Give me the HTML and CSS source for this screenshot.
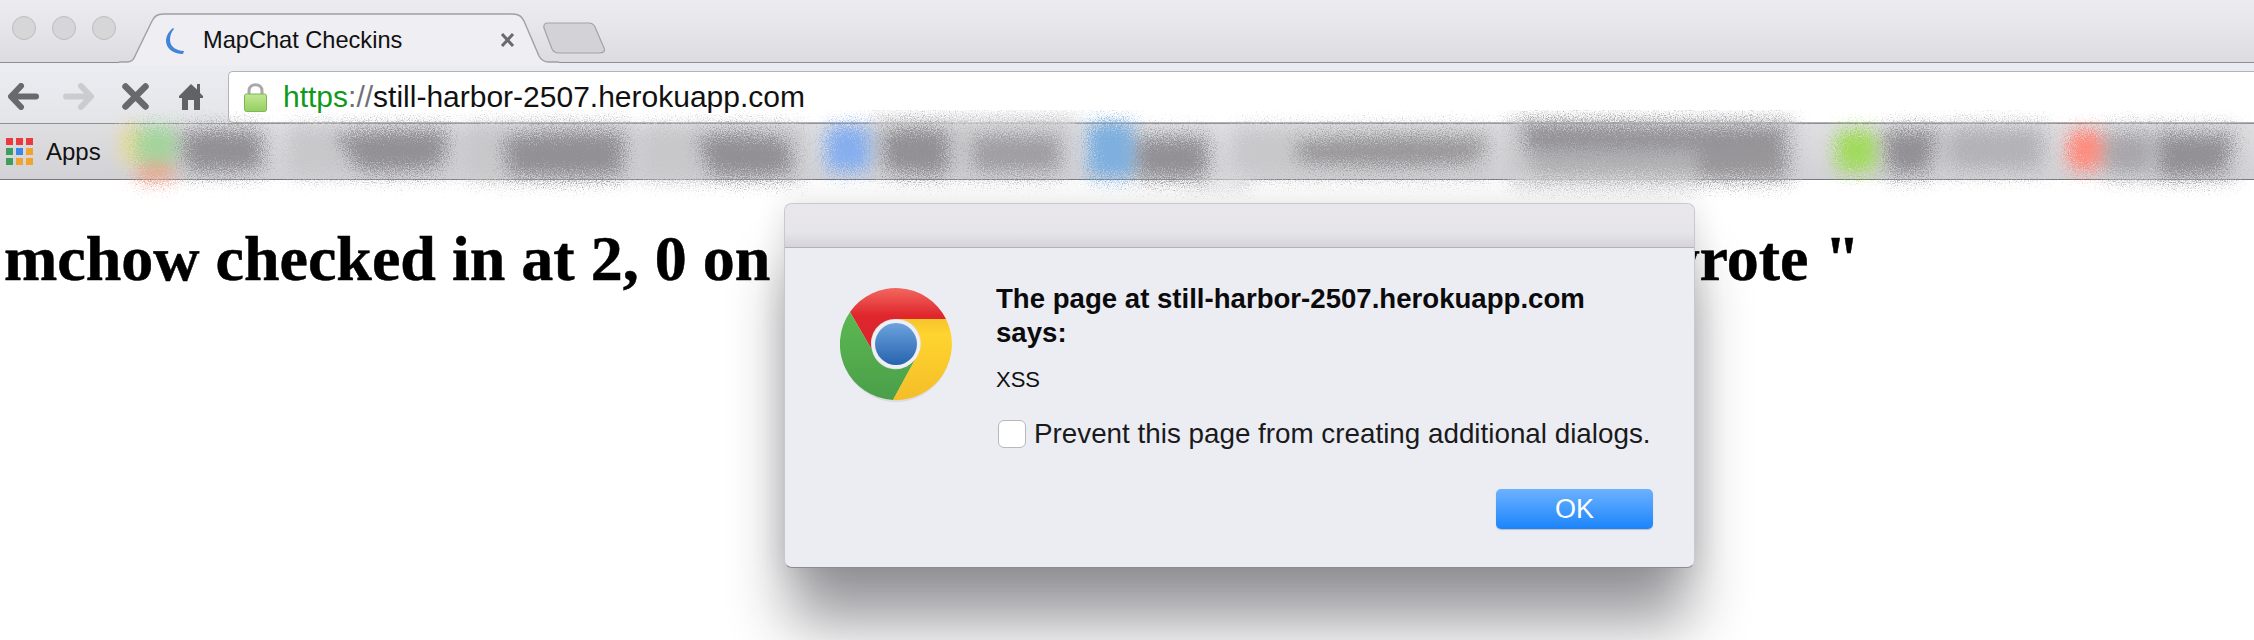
FILE: index.html
```html
<!DOCTYPE html>
<html lang="en">
<head>
<meta charset="utf-8">
<title>MapChat Checkins</title>
<link rel="stylesheet" href="styles.css">
</head>
<body>
<header class="chrome">
  <div class="tabstrip">
    <div class="lights"><span class="light"></span><span class="light"></span><span class="light"></span></div>
    <div class="tab">
      <svg class="tab-shape" width="440" height="52" viewBox="0 0 440 52"><path d="M0 49 H8 Q14 49 16 43 L33 8 Q36 1 44 1 H394 Q402 1 405 8 L420 43 Q423 49 430 49 H440 V52 H0 Z" fill="#eeeef3"/><path d="M0 49 H8 Q14 49 16 43 L33 8 Q36 1 44 1 H394 Q402 1 405 8 L420 43 Q423 49 430 49 H440" fill="none" stroke="#a0a0a4" stroke-width="1.4"/><rect x="14" y="49" width="412" height="3" fill="#eeeef3"/></svg>
      <svg class="spinner" width="18" height="26" viewBox="0 0 18 26"><path d="M7 0 C2 4 0 9 0 13 C0 20 7 26 17 26 L18 23 C11 23 4 19 4 12 C4 8 5 4 8 1 Z" fill="#4285d8"/></svg>
      <span class="tab-title">MapChat Checkins</span>
      <svg class="tab-close" width="15" height="14" viewBox="0 0 15 14"><path d="M2 1 L13 13 M13 1 L2 13" stroke="#6a6a6e" stroke-width="3"/></svg>
    </div>
    <svg class="newtab" width="62" height="32" viewBox="0 0 62 32"><path d="M5 1 H46 Q50 1 52 5 L61 26 Q63 31 56 31 H16 Q11 31 9 27 L1 6 Q0 1 5 1 Z" fill="#d3d3d7" stroke="#a3a3a7" stroke-width="1.2"/></svg>
  </div>
  <div class="toolbar">
    <div class="nav">
      <svg class="nav-icon back" width="31" height="27" viewBox="0 0 31 27"><path d="M13 3 L3 13.5 L13 24 M4 13.5 H28" fill="none" stroke="#69686c" stroke-width="6" stroke-linecap="round" stroke-linejoin="round"/></svg>
      <svg class="nav-icon forward" width="31" height="27" viewBox="0 0 31 27"><path d="M18 3 L28 13.5 L18 24 M27 13.5 H3" fill="none" stroke="#ccccd0" stroke-width="6" stroke-linecap="round" stroke-linejoin="round"/></svg>
      <svg class="nav-icon stop" width="27" height="27" viewBox="0 0 27 27"><path d="M3.5 3.5 L23.5 23.5 M23.5 3.5 L3.5 23.5" stroke="#69686c" stroke-width="6.5" stroke-linecap="round"/></svg>
      <svg class="nav-icon home" width="24" height="27" viewBox="0 0 24 27"><path d="M12 1 L18 6.5 V1 H21 V10 L24 13 V15 H21 V27 H15 V17 H9 V27 H3 V15 H0 V13 Z" fill="#626165"/></svg>
    </div>
    <div class="omnibox">
      <svg class="lock" width="23" height="29" viewBox="0 0 23 29"><defs><linearGradient id="lk" x1="0" y1="0" x2="0" y2="1"><stop offset="0" stop-color="#c3e795"/><stop offset="1" stop-color="#92cf5f"/></linearGradient></defs><path d="M5 12 V8 C5 -0.5 18 -0.5 18 8 V12" fill="none" stroke="#a9a9ad" stroke-width="3"/><rect x="0.5" y="11" width="22" height="17.5" rx="2" fill="url(#lk)" stroke="#7fb455"/></svg>
      <span class="url"><span class="scheme">https</span><span class="sep">://</span>still-harbor-2507.herokuapp.com</span>
    </div>
  </div>
  <div class="bookmarks">
    <div class="apps-grid">
      <i class="r"></i><i class="r"></i><i class="r"></i>
      <i class="g"></i><i class="b"></i><i class="o"></i>
      <i class="g"></i><i class="o"></i><i class="o"></i>
    </div>
    <span class="apps-label">Apps</span>
    <svg class="smudges" width="2254" height="90" viewBox="0 110 2254 90">
      <defs>
        <filter id="grain" x="-5%" y="-50%" width="110%" height="200%" color-interpolation-filters="sRGB">
          <feTurbulence type="fractalNoise" baseFrequency="0.85" numOctaves="3" seed="4" result="n"/>
          <feGaussianBlur in="SourceGraphic" stdDeviation="7" result="s"/>
          <feDisplacementMap in="s" in2="n" scale="40" xChannelSelector="R" yChannelSelector="G"/>
        </filter>
      </defs>
      <g filter="url(#grain)">
        <g fill="#c8c8cb">
          <rect x="170" y="126" width="100" height="50" rx="12"/><rect x="286" y="126" width="170" height="50" rx="12"/>
          <rect x="462" y="124" width="172" height="56" rx="12"/><rect x="640" y="126" width="166" height="54" rx="12"/>
          <rect x="872" y="122" width="200" height="54" rx="10"/><rect x="1134" y="132" width="80" height="48" rx="10"/>
          <rect x="1232" y="128" width="262" height="48" rx="12"/><rect x="1506" y="118" width="290" height="64" rx="10"/>
          <rect x="1880" y="126" width="60" height="52" rx="10"/><rect x="1940" y="124" width="110" height="50" rx="12"/>
          <rect x="2100" y="126" width="140" height="54" rx="12"/>
          <rect x="1513" y="178" width="190" height="10" rx="4" fill="#dcdcdf"/><rect x="870" y="116" width="210" height="10" rx="4" fill="#d8d8db"/>
          <rect x="1190" y="176" width="60" height="12" rx="4" fill="#dcdcdf"/>
        </g>
        <g fill="#929094">
          <path d="M182 134 Q220 126 260 134 L262 168 Q220 174 188 170 Z"/>
          <path d="M336 136 Q390 126 448 132 L442 164 Q420 174 360 170 Z"/>
          <path d="M504 138 Q560 128 624 134 L622 174 Q570 180 508 174 Z"/>
          <path d="M698 138 Q740 128 788 140 L792 174 Q740 180 710 174 Z"/>
          <path d="M883 132 Q920 124 948 132 V174 Q915 178 886 170 Z"/>
          <rect x="973" y="136" width="86" height="36" rx="8" fill="#a09ea2"/>
          <rect x="1138" y="138" width="68" height="40" rx="6"/>
          <path d="M1296 142 Q1390 132 1490 140 L1472 162 Q1390 170 1298 162 Z" fill="#999799"/>
          <path d="M1523 124 Q1650 128 1784 128 V152 Q1650 150 1528 152 Z"/>
          <rect x="1530" y="148" width="170" height="28" rx="8" fill="#b0afb2"/>
          <rect x="1698" y="144" width="88" height="34" rx="8" fill="#989699"/>
          <path d="M1884 132 L1936 130 L1928 172 L1890 174 Z"/>
          <rect x="1950" y="130" width="90" height="38" rx="10" fill="#b3b2b6"/>
          <rect x="2106" y="134" width="44" height="38" rx="8" fill="#a8a6aa"/>
          <path d="M2158 134 L2232 136 L2224 174 L2160 178 Z"/>
        </g>
        <rect x="120" y="124" width="24" height="40" rx="10" fill="#e6d99a"/>
        <rect x="136" y="126" width="40" height="38" rx="10" fill="#a3d49c"/>
        <rect x="136" y="164" width="38" height="18" rx="8" fill="#eda692"/>
        <rect x="826" y="126" width="44" height="46" rx="8" fill="#86aeee"/>
        <rect x="1088" y="122" width="46" height="56" rx="8" fill="#7dafdf"/>
        <rect x="1836" y="130" width="40" height="42" rx="8" fill="#a1da5d"/>
        <rect x="2068" y="130" width="34" height="40" rx="8" fill="#ff8b7e"/>
      </g>
    </svg>
  </div>
</header>
<main class="page">
  <h1 class="checkin"><span>mchow checked in at 2, 0 on</span><span>wrote "</span></h1>
</main>
<div class="dialog">
  <div class="dialog-title"></div>
  <div class="dialog-body">
    <svg class="logo" width="112" height="114" viewBox="-56 -56 112 114">
      <defs>
        <linearGradient id="lr" x1="0" y1="0" x2="0" y2="1"><stop offset="0" stop-color="#f2675f"/><stop offset="0.45" stop-color="#df262c"/><stop offset="1" stop-color="#d9232b"/></linearGradient>
        <linearGradient id="lg" x1="0" y1="0" x2="0" y2="1"><stop offset="0" stop-color="#5cb851"/><stop offset="1" stop-color="#4a9f49"/></linearGradient>
        <linearGradient id="ly" x1="0" y1="0" x2="0" y2="1"><stop offset="0" stop-color="#f6c52d"/><stop offset="0.2" stop-color="#ffd42f"/><stop offset="1" stop-color="#f4bd28"/></linearGradient>
        <linearGradient id="lb" x1="0" y1="0" x2="0" y2="1"><stop offset="0" stop-color="#6ca3de"/><stop offset="1" stop-color="#2763ae"/></linearGradient>
      </defs>
      <ellipse cx="0" cy="2" rx="55" ry="56" fill="#c9c9cd" opacity="0.5"/>
      <path d="M-46 -32 A56 56 0 0 1 50 -25 H0 A24 24 0 0 0 -24 6 Z" fill="url(#lr)"/>
      <path d="M-46 -32 L-24 6 A24 24 0 0 0 21 12 L-3 56 A56 56 0 0 1 -46 -32 Z" fill="url(#lg)"/>
      <path d="M50 -25 A56 56 0 0 1 -3 56 L21 12 A24 24 0 0 0 0 -25 Z" fill="url(#ly)"/>
      <circle r="24.5" fill="#eef0f4"/>
      <circle r="21" fill="url(#lb)"/>
    </svg>
    <div class="dialog-content">
      <p class="dialog-heading">The page at still-harbor-2507.herokuapp.com<br>says:</p>
      <p class="dialog-message">XSS</p>
      <label class="prevent"><span class="checkbox"></span><span>Prevent this page from creating additional dialogs.</span></label>
      <div class="actions"><button class="ok" type="button">OK</button></div>
    </div>
  </div>
</div>
</body>
</html>
```
FILE: styles.css
```css
* { box-sizing: border-box; }
html, body { margin: 0; height: 640px; overflow: hidden; background: #fff; }
body { font-family: "Liberation Sans", Arial, sans-serif; color: #000; position: relative; }

.chrome { display: flex; flex-direction: column; }

.tabstrip {
  height: 63px;
  display: flex;
  align-items: flex-start;
  background: linear-gradient(#ecebef, #e7e7eb 40%, #dcdce0);
  border-bottom: 1px solid #8f8f93;
}
.lights { display: flex; gap: 16px; padding: 16px 0 0 12px; width: 119px; flex: none; }
.light { width: 24px; height: 24px; border-radius: 50%; background: #d6d6d9; border: 1px solid #bdbdc0; flex: none; }

.tab {
  position: relative;
  width: 424px;
  height: 64px;
  flex: none;
  display: flex;
  align-items: center;
  padding: 16px 0 0 47px;
}
.tab-shape { position: absolute; left: 0; top: 13px; }
.spinner { position: relative; flex: none; margin-top: 2px; }
.tab-title { position: relative; font-size: 23.6px; margin-left: 19px; width: 297px; flex: none; color: #111; }
.tab-close { position: relative; flex: none; }
.newtab { flex: none; margin: 22px 0 0 0; }

.toolbar {
  height: 60px;
  display: flex;
  padding-top: 8px;
  background: linear-gradient(#ecedf2, #e4e5e9);
}
.nav { width: 228px; flex: none; display: flex; align-items: flex-start; padding: 12px 0 0 8px; }
.nav-icon { flex: none; }
.forward { margin-left: 24px; }
.stop { margin-left: 28px; }
.home { margin-left: 30px; }

.omnibox {
  flex: 1;
  height: 52px;
  display: flex;
  align-items: center;
  background: #fff;
  border: 1px solid #b3b3b7;
  border-right: 0;
  border-radius: 5px 0 0 5px;
  padding-left: 15px;
}
.lock { flex: none; }
.url { font-size: 30px; margin-left: 16px; color: #111; }
.scheme { color: #109a1c; }
.sep { color: #6f7078; }

.bookmarks {
  position: relative;
  height: 57px;
  display: flex;
  align-items: center;
  background: linear-gradient(#dfdfe2, #d2d2d6);
  border-top: 1px solid #8f8f93;
  border-bottom: 1px solid #77777b;
  padding-left: 6px;
}
.apps-grid { display: grid; grid-template-columns: repeat(3, 7px); grid-auto-rows: 7px; gap: 3px; }
.apps-grid i { display: block; }
.r { background: #ea3a3f; }
.g { background: #3f9e5c; }
.b { background: #3b86ea; }
.o { background: #eea42e; }
.apps-label { font-size: 24px; margin-left: 13px; color: #111; }
.smudges { position: absolute; left: 0; top: -14px; pointer-events: none; }

.page { padding: 0 4px; }
.checkin {
  display: flex;
  justify-content: space-between;
  width: 1856px;
  margin: 42px 0 0;
  font-family: "Liberation Serif", "Times New Roman", serif;
  font-size: 64px;
  line-height: 74px;
  font-weight: 700;
  white-space: nowrap;
  -webkit-text-stroke: 0.5px #000;
}

.dialog {
  position: absolute;
  left: 784px;
  top: 203px;
  width: 911px;
  height: 365px;
  border-radius: 8px;
  background: #ecedf2;
  border: 1px solid #c9c8cc;
  border-bottom-color: #8d8c90;
  box-shadow: 0 60px 60px -6px rgba(30, 28, 36, 0.46), 0 0 30px rgba(30, 28, 36, 0.14);
}
.dialog-title {
  height: 44px;
  border-radius: 8px 8px 0 0;
  background: linear-gradient(#e9e7ed, #e6e5ea 65%, #d6d4da);
  border-bottom: 1px solid #b3b2b6;
}
.dialog-body { display: flex; padding: 40px 0 0 55px; }
.logo { flex: none; }
.dialog-content { margin: -6px 0 0 44px; width: 657px; }
.dialog-heading { margin: 0; font-size: 27.6px; line-height: 34px; font-weight: 700; color: #0b0b0d; }
.dialog-message { margin: 17px 0 0; font-size: 22px; line-height: 26px; color: #111; }
.prevent { display: flex; align-items: center; margin-top: 25px; font-size: 27.8px; color: #1a1a1c; white-space: nowrap; }
.checkbox { width: 28px; height: 28px; margin: 0 8px 0 2px; flex: none; background: #fff; border: 1px solid #b8b8bc; border-radius: 6px; }
.actions { display: flex; justify-content: flex-end; margin-top: 39px; }
.ok {
  width: 157px;
  height: 40px;
  padding: 0;
  border: 0;
  border-radius: 5px;
  color: #fff;
  font: 27px "Liberation Sans", Arial, sans-serif;
  background: linear-gradient(#6cb2ff, #1b84fb);
  box-shadow: 0 1px 1px rgba(0, 0, 0, 0.2);
}
```
